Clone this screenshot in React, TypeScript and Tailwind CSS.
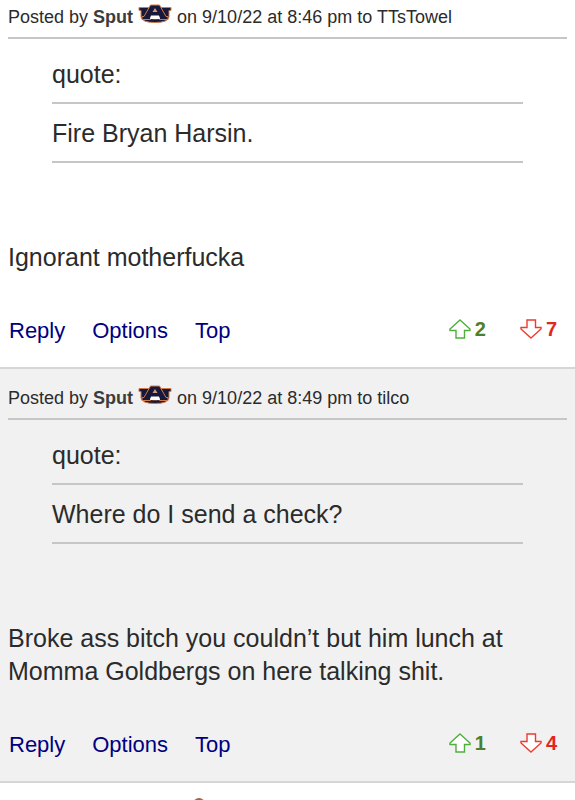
type Post = {
  id: number
  author: string
  date: string
  replyTo: string
  quote: string
  body: string
  up: number
  down: number
}

const posts: Post[] = [
  {
    id: 1,
    author: 'Sput',
    date: '9/10/22 at 8:46 pm',
    replyTo: 'TTsTowel',
    quote: 'Fire Bryan Harsin.',
    body: 'Ignorant motherfucka',
    up: 2,
    down: 7,
  },
  {
    id: 2,
    author: 'Sput',
    date: '9/10/22 at 8:49 pm',
    replyTo: 'tilco',
    quote: 'Where do I send a check?',
    body: 'Broke ass bitch you couldn’t but him lunch at Momma Goldbergs on here talking shit.',
    up: 1,
    down: 4,
  },
]

function TeamLogo() {
  return (
    <svg viewBox="0 0 34 20" className="mx-[5px] mb-2 inline-block h-5 w-[34px] align-middle" aria-hidden="true">
      {/* the U */}
      <path
        d="M1 3.500H11V6.500H9.500V12Q10 15 17 15T24.500 12V6.500H23V3.500H33V6.500H31V13Q30 18.500 17 18.500T3 13V6.500H1Z"
        fill="#17183a"
        stroke="#cf7a4a"
        strokeWidth="1"
        strokeLinejoin="round"
      />
      {/* the A over it */}
      <path
        d="M12.500 1H21.500L28 12.500H30V15.500H21.500V13H12.500V15.500H4V12.500H6Z"
        fill="#17183a"
        stroke="#cf7a4a"
        strokeWidth="1"
        strokeLinejoin="round"
      />
      <path d="M17 4L19.500 8H14.500Z" fill="#cf9a80" />
      <path d="M13 11.500H21L22 15H12Z" fill="#fff" />
    </svg>
  )
}

function ArrowUp() {
  return (
    <svg viewBox="0 0 22 20" className="h-5 w-[22px]" aria-hidden="true">
      <path d="M11 1L21 10V11.500H15.500V19H7V11.500H1V10Z" fill="#fff" stroke="#4fae3c" strokeWidth="1.4" />
    </svg>
  )
}

function ArrowDown() {
  return (
    <svg viewBox="0 0 22 20" className="h-5 w-[22px]" aria-hidden="true">
      <path d="M11 19L21 10V8.500H15.500V1H7V8.500H1V10Z" fill="#fff" stroke="#ee3a30" strokeWidth="1.4" />
    </svg>
  )
}

function PostItem({ post, first }: { post: Post; first: boolean }) {
  return (
    <article className={`border-b-2 border-[#d6d6d6] ${first ? 'bg-white pt-[3px]' : 'bg-[#f1f1f1] pt-[15px]'}`}>
      <header className="mx-2 border-b-2 border-[#c6c6c6] pb-[6px] text-[18px] leading-7">
        <div className="h-7 whitespace-nowrap">
          Posted by <strong className="text-[#3c3c3c]">{post.author}</strong>
          <TeamLogo />
          on {post.date} to {post.replyTo}
        </div>
      </header>

      <blockquote className="mx-[52px] mt-[19px] text-[25px] leading-8">
        <p className="border-b-2 border-[#c6c6c6] pb-3">quote:</p>
        <p className="border-b-2 border-[#c6c6c6] pt-[13px] pb-3">{post.quote}</p>
      </blockquote>

      <p className="mx-2 mt-[78px] text-[25px] leading-[33px]">{post.body}</p>

      <footer className="mt-[41px] mb-5 flex h-8 items-center pr-[18px] pl-[9px]">
        <nav className="flex gap-[27px] text-[22px] leading-8 text-[#00007f]">
          <a href="#reply">Reply</a>
          <a href="#options">Options</a>
          <a href="#top">Top</a>
        </nav>
        <div className="mb-1 ml-auto flex gap-[34px] text-[20px] leading-6 font-bold">
          <button className="flex items-center gap-1 text-[#4a8030]" aria-label={`Upvote, ${post.up}`}>
            <ArrowUp />
            {post.up}
          </button>
          <button className="flex items-center gap-1 text-[#e3261d]" aria-label={`Downvote, ${post.down}`}>
            <ArrowDown />
            {post.down}
          </button>
        </div>
      </footer>
    </article>
  )
}

export default function App() {
  return (
    <main
      id="top"
      className="h-screen overflow-hidden bg-white text-[#2b2b2b] font-['Liberation_Sans',Arial,sans-serif]"
    >
      {posts.map((post, i) => (
        <PostItem key={post.id} post={post} first={i === 0} />
      ))}
      {/* next post, only the top of its badge is in view */}
      <div className="pt-[15px] pl-[193px]">
        <svg viewBox="0 0 12 12" className="h-3 w-3" aria-hidden="true">
          <circle cx="6" cy="6" r="6" fill="#a5624a" />
          <circle cx="6" cy="7" r="5" fill="#43201c" />
        </svg>
      </div>
    </main>
  )
}
